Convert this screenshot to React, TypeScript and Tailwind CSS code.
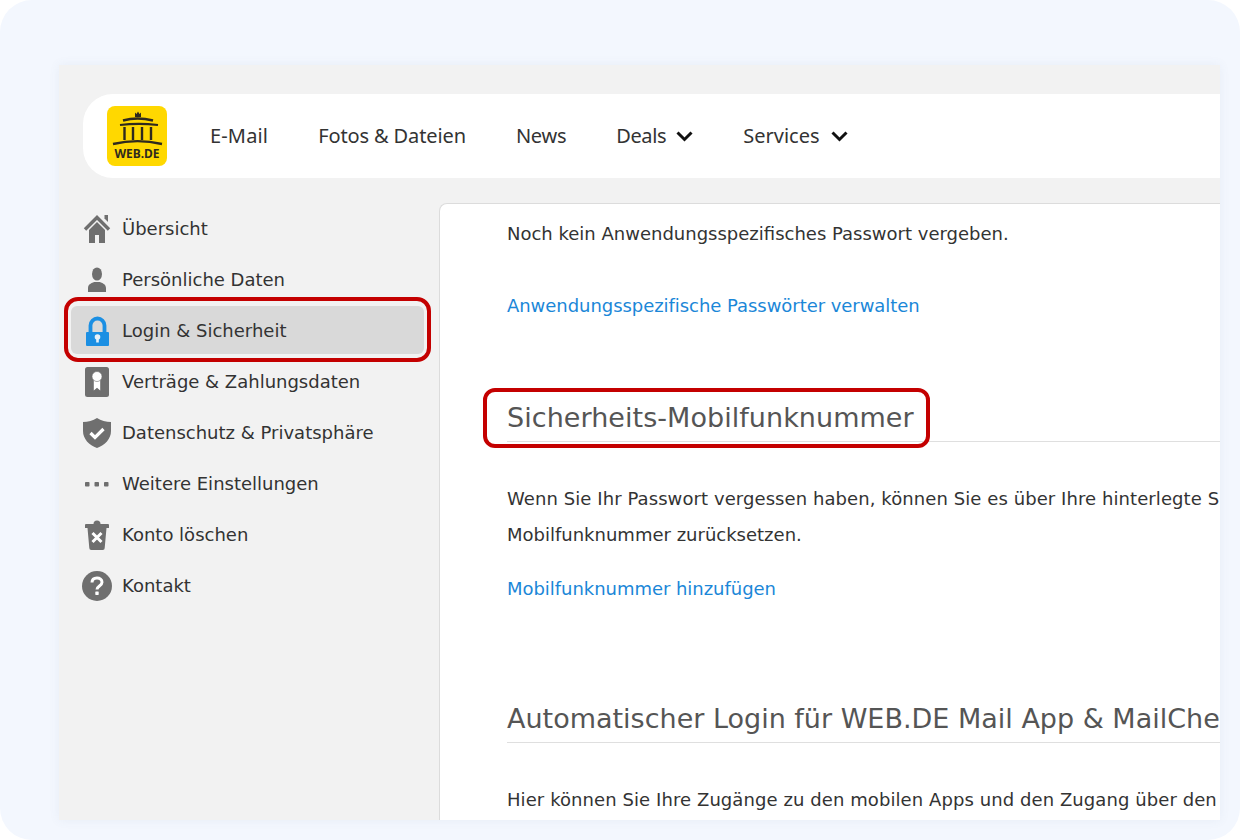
import React from "react";

const sans = "font-['DejaVu_Sans',sans-serif]";

const HomeIcon = () => (
  <svg viewBox="0 0 30 30" className="w-[30px] h-[30px]" fill="#6f6f6f">
    <path d="M22.500 1h3.500v7l-3.500-3.500z" />
    <path d="M3 15.500 15 3.500l12 12" fill="none" stroke="#6f6f6f" strokeWidth="3.400" />
    <path d="M15 8 7 16v13h6v-8h4v8h6V16z" />
  </svg>
);

const PersonIcon = () => (
  <svg viewBox="0 0 30 30" className="w-[30px] h-[30px]" fill="#6f6f6f">
    <ellipse cx="15" cy="9" rx="5" ry="6.600" />
    <path d="M6 27v-4c0-4 4-5 6-6h6c2 1 6 2 6 6v4z" />
  </svg>
);

const LockIcon = () => (
  <svg viewBox="0 0 30 30" className="w-[30px] h-[30px]">
    <path d="M8.500 18V9.500a7 7 0 0 1 14 0V18" fill="none" stroke="#1b8fe3" strokeWidth="3.800" />
    <path d="M5 16h21a1 1 0 0 1 1 1v12a1 1 0 0 1-1 1H5a1 1 0 0 1-1-1V17a1 1 0 0 1 1-1z" fill="#1b8fe3" />
    <circle cx="15.500" cy="21" r="2.800" fill="#e6f0f8" />
    <path d="M14.200 21.500h2.600v5h-2.600z" fill="#e6f0f8" />
  </svg>
);

const ContractIcon = () => (
  <svg viewBox="0 0 30 30" className="w-[30px] h-[30px]">
    <rect x="3" y="0" width="24" height="30" rx="2.500" fill="#6f6f6f" />
    <path d="M11.800 12v11.500l3.200-2.800 3.200 2.800V12z" fill="#fff" />
    <circle cx="15" cy="9.500" r="5" fill="#fff" stroke="#6f6f6f" strokeWidth="0.600" />
  </svg>
);

const ShieldIcon = () => (
  <svg viewBox="0 0 30 30" className="w-[30px] h-[30px]">
    <path d="M1 4c5 0 10-1.500 14-4 4 2.500 9 4 14 4v9c0 8-6 14-14 17C7 27 1 21 1 13z" fill="#6f6f6f" />
    <path d="m8.500 15 4.500 4.500 8.500-8.500" fill="none" stroke="#fff" strokeWidth="3.200" />
  </svg>
);

const DotsIcon = () => (
  <svg viewBox="0 0 30 30" className="w-[30px] h-[30px]" fill="#6f6f6f">
    <rect x="3" y="13" width="4.500" height="4.500" rx="0.800" />
    <rect x="12.500" y="13" width="4.500" height="4.500" rx="0.800" />
    <rect x="22" y="13" width="4.500" height="4.500" rx="0.800" />
  </svg>
);

const TrashIcon = () => (
  <svg viewBox="0 0 30 30" className="w-[30px] h-[30px]">
    <path d="M4 4h7.500a3.500 3.500 0 0 1 7 0H26a1 1 0 0 1 1 1v3H3V5a1 1 0 0 1 1-1z" fill="#6f6f6f" />
    <path d="M5.500 8h19l-1.800 20a2 2 0 0 1-2 2H9.300a2 2 0 0 1-2-2z" fill="#6f6f6f" />
    <path d="m10.500 13 9 9m0-9-9 9" stroke="#fff" strokeWidth="3" fill="none" />
  </svg>
);

const HelpIcon = () => (
  <svg viewBox="0 0 30 30" className="w-[30px] h-[30px]">
    <circle cx="15" cy="15" r="15" fill="#6f6f6f" />
    <path d="M10 11.500C10 8.500 12.200 7 15 7s5 1.600 5 4.200c0 3.800-5 3.800-5 7.300" fill="none" stroke="#fff" strokeWidth="3" />
    <rect x="13.300" y="20.500" width="3.400" height="3.400" rx="0.600" fill="#fff" />
  </svg>
);

const Chevron = () => (
  <svg viewBox="0 0 17 11" className="w-[17px] h-[11px]" fill="none" stroke="#111" strokeWidth="3">
    <path d="m1.500 1.500 7 7 7-7" />
  </svg>
);

const Logo = () => (
  <div className="w-[60px] h-[60px] rounded-lg bg-[#ffd800] flex flex-col items-center shrink-0">
    <svg viewBox="0 0 60 40" className="w-[60px] h-[40px] shrink-0" fill="none" stroke="#2f2a1e">
      <path d="M28 11V6.500l1.500 1.500L31 5.500 32.500 8 34 6.500V11z" fill="#2f2a1e" strokeWidth="0" />
      <path d="M16 14.500c9-2.500 20-2.500 30 0" strokeWidth="2.400" />
      <path d="M13 19c12-1.500 25-1.500 38 0" strokeWidth="2.200" />
      <path d="M17.500 21v13M26 21v13M35 21v13M44 21v13" strokeWidth="2.400" />
      <path d="M6 38c15-3.500 34-3.500 49 0" strokeWidth="2.400" />
    </svg>
    <span className="font-['Noto_Sans',sans-serif] font-bold text-[#2f2a1e] text-[12px] leading-[13px] mt-[1px]">WEB.DE</span>
  </div>
);

const menu = [
  { label: "Übersicht", icon: <HomeIcon /> },
  { label: "Persönliche Daten", icon: <PersonIcon /> },
  { label: "Login & Sicherheit", icon: <LockIcon />, active: true },
  { label: "Verträge & Zahlungsdaten", icon: <ContractIcon /> },
  { label: "Datenschutz & Privatsphäre", icon: <ShieldIcon /> },
  { label: "Weitere Einstellungen", icon: <DotsIcon /> },
  { label: "Konto löschen", icon: <TrashIcon /> },
  { label: "Kontakt", icon: <HelpIcon /> },
];

export default function App() {
  return (
    <div className="w-[1240px] h-[840px] bg-white overflow-hidden">
      <div className="w-full h-full bg-[#f3f7fe] rounded-[32px] pt-[65px] pl-[59px] pr-[20px] pb-[20px]">
        <div className="w-full h-full bg-[#f2f2f2] overflow-hidden flex flex-col shadow-[0_0_10px_rgba(90,110,150,0.08)]">
          {/* Top navigation */}
          <header className="ml-[24px] mt-[29px] h-[84px] shrink-0 bg-white rounded-l-[30px] flex items-center pl-[24px]">
            <Logo />
            <nav className="ml-[43px] flex items-center gap-[50px] font-['Noto_Sans',sans-serif] text-[20px] text-[#333]">
              <span className="tracking-[0.15px]">E-Mail</span>
              <span className="tracking-[-0.12px]">Fotos &amp; Dateien</span>
              <span className="tracking-[-0.25px]">News</span>
              <span className="flex items-center gap-[10px]"><span className="tracking-[-0.4px]">Deals</span> <Chevron /></span>
              <span className="flex items-center gap-[11px]"><span className="tracking-[0.03px]">Services</span> <Chevron /></span>
            </nav>
          </header>

          <div className="flex flex-1 mt-[25px] min-h-0">
            {/* Sidebar */}
            <aside className={`w-[380px] shrink-0 pl-[12px] pr-[14px] ${sans} text-[18px] text-[#333]`}>
              {menu.map((item) => (
                <div key={item.label} className="relative h-[51px] flex items-center">
                  {item.active && (
                    <div className="absolute left-[-7px] right-[-6px] top-[-8px] bottom-[-6px] border-4 border-[#c40000] rounded-[14px] pt-[5px] pb-[4px] px-[3px]">
                      <div className="w-full h-full bg-[#d9d9d9] rounded-md" />
                    </div>
                  )}
                  <div className="relative flex items-center gap-[10px] pl-[11px]">
                    {item.icon}
                    <span>{item.label}</span>
                  </div>
                </div>
              ))}
            </aside>

            {/* Content panel */}
            <main className={`flex-1 min-w-0 bg-white border-l border-t border-[#dcdcdc] rounded-tl-lg pl-[67px] overflow-hidden ${sans} text-[18px] text-[#333] whitespace-nowrap`}>
              <p className="mt-[16px] leading-[28px]">Noch kein Anwendungsspezifisches Passwort vergeben.</p>
              <a className="block mt-[44px] leading-[28px] text-[#1b87d8] tracking-[-0.05px]">Anwendungsspezifische Passwörter verwalten</a>

              <div className="relative mt-[77px]">
                <div className="absolute left-[-24px] top-[-9px] w-[447px] h-[60px] border-4 border-[#c40000] rounded-[12px]" />
                <h2 className="text-[27px] leading-[34px] pt-[4px] pb-[6px] text-[#555] border-b border-[#dfdfdf] font-normal tracking-[0.05px]">Sicherheits-Mobilfunknummer</h2>
              </div>

              <p className="mt-[43px] leading-[28px] tracking-[0.08px]">Wenn Sie Ihr Passwort vergessen haben, können Sie es über Ihre hinterlegte Sicherheits-</p>
              <p className="mt-[8px] leading-[28px]">Mobilfunknummer zurücksetzen.</p>
              <a className="block mt-[26px] leading-[28px] text-[#1b87d8] tracking-[-0.04px]">Mobilfunknummer hinzufügen</a>

              <div className="mt-[99px]">
                <h2 className="text-[27px] leading-[34px] pb-[6px] text-[#555] border-b border-[#dfdfdf] font-normal">Automatischer Login für WEB.DE Mail App &amp; MailCheck</h2>
              </div>

              <p className="mt-[43px] leading-[28px] tracking-[0.08px]">Hier können Sie Ihre Zugänge zu den mobilen Apps und den Zugang über den</p>
            </main>
          </div>
        </div>
      </div>
    </div>
  );
}
